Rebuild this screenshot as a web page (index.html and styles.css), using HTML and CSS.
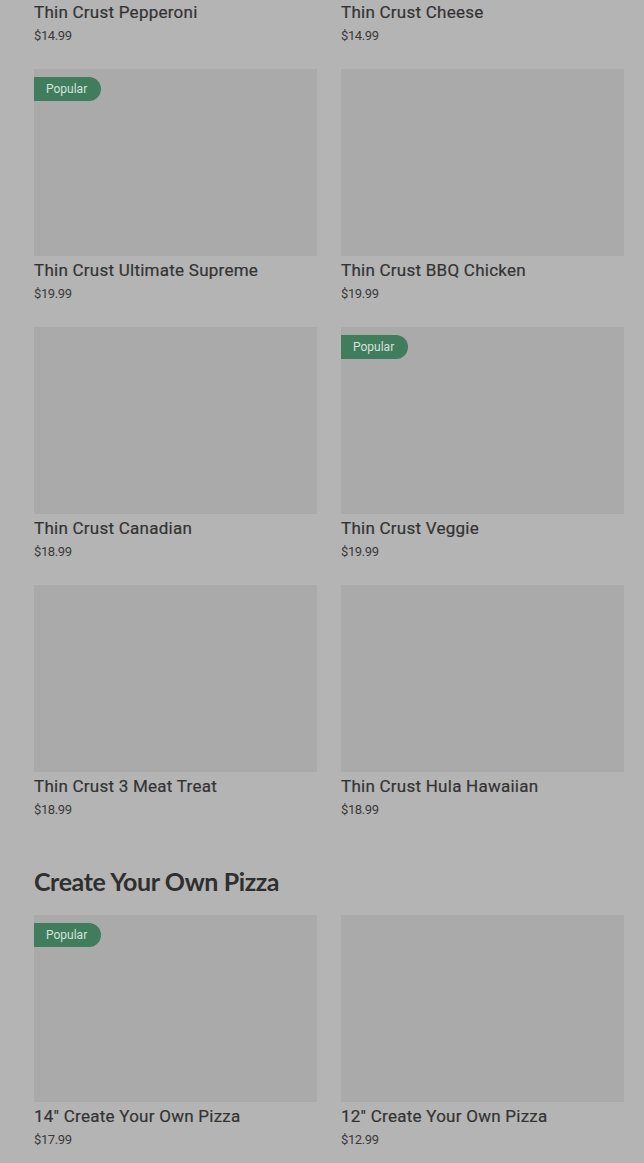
FILE: index.html
```html
<!DOCTYPE html>
<html>
<head>
<meta charset="utf-8">
<link rel="stylesheet" href="styles.css">
</head>
<body>
<main class="page">
  <section class="grid first">
    <div class="card"><div class="thumb"></div><div class="name">Thin Crust Pepperoni</div><div class="price">$14.99</div></div>
    <div class="card"><div class="thumb"></div><div class="name">Thin Crust Cheese</div><div class="price">$14.99</div></div>
    <div class="card"><div class="thumb"><span class="badge">Popular</span></div><div class="name">Thin Crust Ultimate Supreme</div><div class="price">$19.99</div></div>
    <div class="card"><div class="thumb"></div><div class="name">Thin Crust BBQ Chicken</div><div class="price">$19.99</div></div>
    <div class="card"><div class="thumb"></div><div class="name">Thin Crust Canadian</div><div class="price">$18.99</div></div>
    <div class="card"><div class="thumb"><span class="badge">Popular</span></div><div class="name">Thin Crust Veggie</div><div class="price">$19.99</div></div>
    <div class="card"><div class="thumb"></div><div class="name">Thin Crust 3 Meat Treat</div><div class="price">$18.99</div></div>
    <div class="card"><div class="thumb"></div><div class="name">Thin Crust Hula Hawaiian</div><div class="price">$18.99</div></div>
  </section>
  <h2 class="section-title">Create Your Own Pizza</h2>
  <section class="grid">
    <div class="card"><div class="thumb"><span class="badge">Popular</span></div><div class="name">14" Create Your Own Pizza</div><div class="price">$17.99</div></div>
    <div class="card"><div class="thumb"></div><div class="name">12" Create Your Own Pizza</div><div class="price">$12.99</div></div>
  </section>
</main>
</body>
</html>
```
FILE: styles.css
```css
html, body {
  margin: 0;
  padding: 0;
  background: #b4b4b4;
}
body {
  font-family: Roboto, "Liberation Sans", sans-serif;
  color: #333333;
  overflow: hidden;
  height: 1163px;
}
.page {
  padding: 0 20px 0 34px;
}
.grid {
  display: grid;
  grid-template-columns: 283px 283px;
  column-gap: 24px;
  row-gap: 26px;
}
.grid.first {
  margin-top: -189px;
}
.card {
  display: flex;
  flex-direction: column;
}
.thumb {
  position: relative;
  height: 187px;
  background: #aaaaaa;
}
.badge {
  position: absolute;
  left: 0;
  top: 8px;
  height: 24px;
  line-height: 24px;
  padding: 0 14px 0 12px;
  background: #3f7d5d;
  color: #d6e2dc;
  font-size: 12px;
  border-radius: 0 12px 12px 0;
}
.name {
  margin-top: 4px;
  font-size: 17px;
  line-height: 20px;
  font-weight: 400;
  letter-spacing: 0.25px;
  color: #333333;
  -webkit-text-stroke: 0.2px #333333;
}
.price {
  margin-top: 6px;
  font-size: 13px;
  line-height: 15px;
  letter-spacing: -0.4px;
  color: #3a3a3a;
}
.section-title {
  margin: 49px 0 19px;
  font-family: Lato, sans-serif;
  font-weight: 700;
  font-size: 25px;
  line-height: 30px;
  letter-spacing: -0.4px;
  color: #2f2f2f;
}
```
